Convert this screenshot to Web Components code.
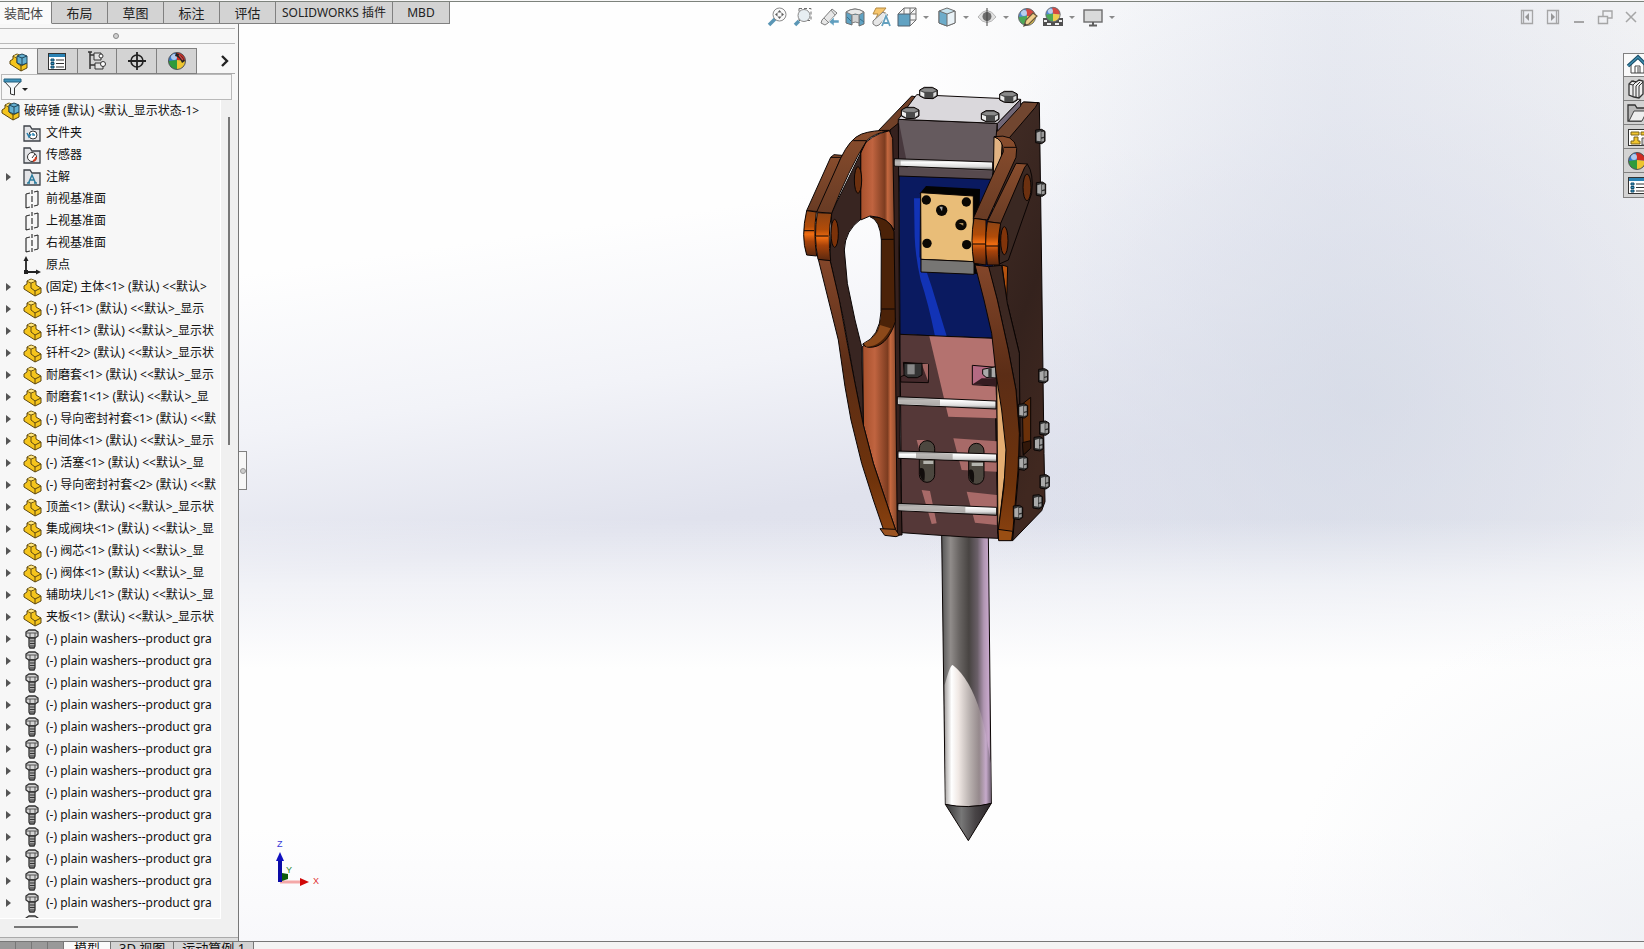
<!DOCTYPE html>
<html lang="zh-CN">
<head>
<meta charset="utf-8">
<title>SOLIDWORKS</title>
<style>
  html, body { height: 100%; }
  body {
    margin: 0;
    overflow: hidden;
    font-family: "Noto Sans", "Noto Sans CJK SC", sans-serif;
    font-size: 12px;
    color: #111;
    background: #f7f7f7;
  }
</style>
</head>
<body>
<cad-app></cad-app>

<script>
const BALL = `
  <circle cx="10" cy="10" r="8.5" fill="#3578d0"/>
  <path d="M9 1.5A8.5 8.5 0 0 1 18.500 10L10 9z" fill="#cf2b22"/>
  <path d="M18.500 10A8.500 8.500 0 0 1 10 18.500L10 9z" fill="#edc52f"/>
  <path d="M1.500 10A8.500 8.500 0 0 0 10 18.500L10 9z" fill="#2f9b3b"/>
  <circle cx="7" cy="6" r="3" fill="#fff" opacity=".6"/>
  <circle cx="10" cy="10" r="8.500" fill="none" stroke="#555"/>`;

const BRICK = `
  <path d="M2 9 5 7V4l4-2 5 2v4l5 3v5l-6 3L2 12z" fill="#f5c51d" stroke="#5c4710" stroke-linejoin="round"/>
  <path d="M5 4l4 2 5-2M9 6v5l4 3 6-3M13 14v5" fill="none" stroke="#5c4710"/>
  <path d="M9.500 2.500 13 4 9 5.500 5.500 4z" fill="#ffe680"/>`;

const FOLDER = `<path d="M2 3h6l2 3h8v12H2z" fill="#e3e4e7" stroke="#3e4248" stroke-width="1.300"/>`;

const LIST = `
  <rect x="1.500" y="2.500" width="17" height="16" fill="#fff" stroke="#333"/>
  <path d="M2 4.500h16" stroke="#2a83b5" stroke-width="3"/>
  <path d="M4 8h3v2H4zM4 11.500h3v2H4zM4 15h3v2H4z" fill="#3b9bc9" stroke="#124a68"/>
  <path d="M9 9h8M9 12.500h8M9 16h8" stroke="#333"/>`;

const SCOPE = `<path d="M3 13 13 2l5 4-9 10-3 2-4-2z" fill="#e4e4e4" stroke="#666"/><path d="M5 11l4 4M12 3l4 5" stroke="#777"/>`;

const ICONS = {
  assembly: `${BRICK}<path d="M9 4l5-2 5 2v7l-5 2-5-2z" fill="#64afd0" stroke="#20475c"/><path d="M9 4l5 2 5-2M14 6v7" fill="none" stroke="#20475c"/>`,
  part: BRICK,
  list: LIST,
  config: `<path d="M3 1v17M3 4h5M3 14h5M1 1h4" fill="none" stroke="#333" stroke-width="1.500"/><path d="M7 2h7v7H7zM8 12h8v6H8z" fill="#e2e2e2" stroke="#333"/><circle cx="14" cy="5" r="2" fill="#fff" stroke="#333"/><circle cx="16" cy="13" r="2.500" fill="#fff" stroke="#333"/>`,
  target: `<circle cx="10" cy="10" r="6" fill="none" stroke="#222" stroke-width="1.600"/><path d="M10 1v18M1 10h18" stroke="#222" stroke-width="1.800"/>`,
  ball: BALL,
  display: `${BALL}<path d="M9 2q5 1 9 8l-3 2Q13 6 8 5z" fill="#222"/><path d="M12 4l4 5" stroke="#c44" stroke-width="1.500"/>`,
  funnel: `<path d="M2 4h17l-6.500 7v7l-4-1v-6z" fill="#f5f8fa" stroke="#333"/><path d="M2 2h17v3H2z" fill="#3e94bd" stroke="#24607e"/>`,
  history: `${FOLDER}<circle cx="11" cy="12" r="4" fill="#fff" stroke="#333"/><path d="M11 10v2h2M5 10l2 4 2-3" stroke="#2980ad" stroke-width="1.500" fill="none"/>`,
  sensor: `${FOLDER}<circle cx="10" cy="12" r="4.500" fill="#fff" stroke="#333"/><path d="M10 13l3-4" stroke="#333"/><path d="M11 16a4 4 0 0 0 3-4" stroke="#d03a1c" stroke-width="2" fill="none"/>`,
  note: `${FOLDER}<path d="M6.500 16 10 8l3.500 8M8 13h4M5 16h3M12 16h3" fill="none" stroke="#2b7c9e" stroke-width="1.500"/>`,
  plane: `<path d="M4 5v14M16 2v14M4 5l4-1M12 3l4-1M4 19l4-1M12 17l4-1M10 1v4M10 7v6M10 15v4" fill="none" stroke="#333" stroke-width="1.200"/>`,
  origin: `<path d="M4 4v13h12" fill="none" stroke="#222" stroke-width="1.800"/><path d="M4 1 1.500 6h5zM19 17l-5-2.500v5z" fill="#222"/><rect x="2" y="15" width="4" height="4" fill="#222"/>`,
  bolt: `<path d="M4 3l3-2h6l3 2v4l-3 2H7L4 7z" fill="#d4d4d4" stroke="#333" stroke-width="1.300"/><path d="M4 4h12M8 4v4M13 4v4" stroke="#555"/><path d="M7 9h6v8l-1 2H8l-1-2z" fill="#aaa" stroke="#333" stroke-width="1.300"/><path d="M8 12h5M8 14.500h5M8 17h5" stroke="#333"/>`,
  zoomfit: `<path d="M8 12 2 18" stroke="#3e85a9" stroke-width="3.500"/><circle cx="12.500" cy="7.500" r="6.500" fill="#fafafa" stroke="#777"/><path d="M12.500 3l2 2.500h-4zM12.500 12l2-2.500h-4zM8 7.500l2.500-2v4zM17 7.500l-2.500-2v4z" fill="#444"/>`,
  zoomarea: `<rect x="6" y="1.500" width="12" height="12" fill="none" stroke="#555" stroke-dasharray="3 2"/><path d="M6 14l-4 4" stroke="#3e85a9" stroke-width="3.500"/><circle cx="11" cy="8.500" r="6" fill="#e4ecf1" stroke="#777"/>`,
  previous: `${SCOPE}<path d="M20 13h-5v-3l-5 5 5 4v-3h5z" fill="#458fb5" stroke="#fff" stroke-width=".5"/>`,
  section: `<path d="M1 5q9-6 18 0v12l-5 2V9H7v9l-6-2z" fill="#4492b9" stroke="#555"/><path d="M1 5q9-6 18 0l-5 3q-4-2-7 0z" fill="#e5e5e5" stroke="#666"/><path d="M7 8v8q3-2 7 0V8" fill="#ccc" stroke="#666"/><path d="M2 10l4 4M15 12l4 3" stroke="#185878"/>`,
  annotation: `<path d="M5 1h10l-4 5h4L4 13l3-6H2z" fill="#f6bd53" stroke="#a67520"/><path d="M2 14 12 5l5 3-9 10-3 1-3-2z" fill="#e4e4e4" stroke="#666"/><path d="M11 19l4-10 4 10M12.500 16h5" fill="none" stroke="#fff" stroke-width="3"/><path d="M11 19l4-10 4 10M12.500 16h5" fill="none" stroke="#4a91b5" stroke-width="1.800"/>`,
  view: `<path d="M7 1h12v12l-6 6V7H1z" fill="#f5f5f5"/><path d="M1 7h12v12H1z" fill="#4693b8" stroke="#345"/><path d="M1 7l6-6h12v12l-6 6M7 1v6M13 7l6-6M13 1v6h6M13 13h6" fill="none" stroke="#555"/>`,
  cube: `<path d="M2 4l8-3 8 3v12l-8 3-8-3z" fill="#bfe0ed" stroke="#555"/><path d="M2 4l8 3v12l-8-3z" fill="#549fc2"/><path d="M10 7l8-3v12l-8 3z" fill="#e6f1f6"/><path d="M2 4l8 3 8-3v12l-8 3-8-3zM10 7v12" fill="none" stroke="#555"/>`,
  eye: `<path d="M1 10q9-13 18 0-9 11-18 0z" fill="#ddd" stroke="#aaa"/><circle cx="10" cy="9.500" r="4.500" fill="#555"/><path d="M10 1v18" stroke="#222"/>`,
  appearance: `${BALL}<path d="M7 19l2-6 7-7 4 3-8 8z" fill="#efc878" stroke="#4f3d1c" stroke-width="1.200"/><path d="M7 19l1-3 2 2z" fill="#222"/>`,
  scene: `<path d="M0 11h20v8H0z" fill="#333"/><path d="M1 13h3v2H1zM16 13h3v2h-3zM4 16h4v2H4zM12 16h4v2h-4z" fill="#eee"/><g transform="translate(1.500 -1) scale(.85)">${BALL}</g>`,
  monitor: `<rect x="1" y="3" width="18" height="12" fill="#d5d5d5" stroke="#555" stroke-width="1.400"/><path d="M10 15v3M6 18.500h8" stroke="#444" stroke-width="2"/>`,
  paneleft: `<path d="M4.500 3.500h11v13h-11zM6.500 4v12" fill="none" stroke="#999" stroke-width="1.300"/><path d="M12 6v8l-4-4z" fill="#888"/>`,
  paneright: `<path d="M4.500 3.500h11v13h-11zM13.500 4v12" fill="none" stroke="#999" stroke-width="1.300"/><path d="M8 6v8l4-4z" fill="#888"/>`,
  minimize: `<path d="M5 15h10" stroke="#999" stroke-width="2"/>`,
  restore: `<path d="M3.500 9.500h9v7h-9zM8 9V4h9v7h-4" fill="none" stroke="#999" stroke-width="1.400"/>`,
  close: `<path d="M5 5l10 10M15 5 5 15" stroke="#999" stroke-width="1.500"/>`,
  home: `<path d="M4 9v9h13V9l-6-6z" fill="#fff" stroke="#444"/><path d="M8 18v-7h5v7M11 12v6" fill="none" stroke="#444"/><path d="M1 11 11 2l9 9" fill="none" stroke="#184b66" stroke-width="3.500"/><path d="M1 11 11 2l9 9" fill="none" stroke="#3e8dae" stroke-width="1.500"/>`,
  library: `<path d="M2 5l3-3 4 1 3-2 4 1v13l-4 4-5-1-5-2z" fill="#eee" stroke="#333" stroke-width="1.300"/><path d="M2 5l4 1v12M6 6l3-3M9 7v12M6 2l3 1M9 7l4-4M12 7v12M12 7l4-4" fill="none" stroke="#333"/>`,
  folder: `<path d="M1 2h7l2 3h8v5l-4 8H1z" fill="#b8b8b8" stroke="#333" stroke-width="1.300"/><path d="M7 8h13l-5 10H2z" fill="#eee" stroke="#444"/>`,
  palette: `<rect x="1.500" y="2.500" width="20" height="16" fill="#fff" stroke="#333"/><path d="M4 5h8v3H4zM14 5h4v3h-4zM7 10h4v4h2v3H4v-3h3z" fill="#f1c52f" stroke="#7b6218"/><path d="M15 11h6v7h-6z" fill="#ccc" stroke="#555"/>`,
  chevron: `<path d="M7 5l5 5-5 5" fill="none" stroke="#222" stroke-width="2.400"/>`
};

class CadIcon extends HTMLElement {
  constructor() {
    super();
    this.attachShadow({ mode: 'open' });
  }

  connectedCallback() {
    this.shadowRoot.innerHTML = `
      <style>
        :host { display: block; flex: none; width: 20px; height: 20px; }
        svg { display: block; width: 100%; height: 100%; overflow: visible; }
      </style>
      <svg viewBox="0 0 20 20" aria-hidden="true">${ICONS[this.getAttribute('name')]}</svg>`;
  }
}

class CommandTabs extends HTMLElement {
  constructor() {
    super();
    this.attachShadow({ mode: 'open' });
    const tabs = ['装配体', '布局', '草图', '标注', '评估', 'SOLIDWORKS 插件', 'MBD'];
    this.shadowRoot.innerHTML = `
      <style>
        :host { display: flex; border-top: 1px solid #7d827c; margin-top: 1px; height: 22px; }
        button {
          box-sizing: border-box; flex: none; width: 56px; height: 22px; padding: 0; margin: 0;
          border: solid #808080; border-width: 0 1px 1px 0;
          background: #d3d3d3; color: #222;
          font: 13px/20px "Noto Sans", "Noto Sans CJK SC", sans-serif;
          white-space: nowrap;
        }
        .active { width: 52px; padding-right: 4px; background: #fafafa; color: #444; border-bottom-color: #fafafa; }
        .latin { width: auto; min-width: 57px; padding: 0 6px; font-size: 12px; }
      </style>
      ${tabs.map((t, i) => `<button class="${i === 0 ? 'active' : /[A-Z]/.test(t) ? 'latin' : ''}">${t}</button>`).join('')}`;
  }
}

class TreeRow extends HTMLElement {
  constructor() {
    super();
    this.attachShadow({ mode: 'open' });
  }

  connectedCallback() {
    this.shadowRoot.innerHTML = `
      <style>
        :host { display: flex; align-items: center; height: 22px; white-space: nowrap; }
        button { flex: none; width: 22px; height: 22px; padding: 0 0 0 6px; border: 0; background: none; }
        i { display: block; width: 0; border: solid transparent; border-width: 4px 0 4px 5px; border-left-color: #555; }
        :host([leaf]) button { visibility: hidden; }
        :host([root]) button { display: none; }
        span { margin-left: 4px; line-height: 22px; }
      </style>
      <button aria-label="展开"><i></i></button>
      <cad-icon name="${this.getAttribute('icon')}"></cad-icon>
      <span><slot></slot></span>`;
  }
}

class FeatureManager extends HTMLElement {
  constructor() {
    super();
    this.attachShadow({ mode: 'open' });
    const fixed = [['history', '文件夹', 1], ['sensor', '传感器', 1], ['note', '注解', 0],
      ['plane', '前视基准面', 1], ['plane', '上视基准面', 1], ['plane', '右视基准面', 1], ['origin', '原点', 1]];
    // component name, then the part of its display state that the column has room for
    const parts = [['(固定) 主体<1>', '默认>'], ['(-) 钎<1>', '默认>_显示'], ['钎杆<1>', '默认>_显示状'],
      ['钎杆<2>', '默认>_显示状'], ['耐磨套<1>', '默认>_显示'], ['耐磨套1<1>', '默认>_显'],
      ['(-) 导向密封衬套<1>', '默'], ['中间体<1>', '默认>_显示'], ['(-) 活塞<1>', '默认>_显'],
      ['(-) 导向密封衬套<2>', '默'], ['顶盖<1>', '默认>_显示状'], ['集成阀块<1>', '默认>_显'],
      ['(-) 阀芯<1>', '默认>_显'], ['(-) 阀体<1>', '默认>_显'], ['辅助块儿<1>', '默认>_显'],
      ['夹板<1>', '默认>_显示状']];
    const esc = s => s.replace(/</g, '&lt;').replace(/>/g, '&gt;');
    const rows = [
      ...fixed.map(([icon, text, leaf]) => `<tree-row icon="${icon}" ${leaf ? 'leaf' : ''}>${text}</tree-row>`),
      ...parts.map(([name, state]) => `<tree-row icon="part">${esc(`${name} (默认) <<${state}`)}</tree-row>`),
      ...Array(13).fill('<tree-row icon="bolt">(-) plain washers--product gra</tree-row>'),
      '<tree-row icon="bolt" leaf></tree-row>'
    ];
    this.shadowRoot.innerHTML = `
      <style>
        :host { display: flex; flex-direction: column; min-height: 0; background: #f7f7f7; border-right: 1px solid #777; }
        .grip { flex: none; height: 14px; margin: 4px 3px 0 0; border: solid #b9b9b9; border-width: 1px 0; padding-right: 4px; display: grid; place-items: center; }
        .dot { width: 4px; height: 4px; border: 1px solid #888; border-radius: 50%; background: #d0d0d0; }
        .tabs { flex: none; display: flex; height: 25px; margin: 4px 3px 0 0; border-bottom: 1px solid #aaa; }
        .tabs button {
          box-sizing: border-box; width: 40px; height: 26px; padding: 0; display: grid; place-items: center;
          border: 1px solid #808080; border-left-width: 0; background: #d3d3d3;
        }
        .tabs button:first-child { width: 38px; background: #f7f7f7; border-bottom: 0; border-top-color: #aaa; }
        .tabs .more { width: auto; flex: 1; border: 0; padding-left: 18px; background: none; }
        .filter { flex: none; display: flex; align-items: center; height: 24px; margin: 0 6px 0 1px; border: 1px solid #b9b9b9; }
        .filter i { border: solid transparent; border-width: 3px 3px 0; border-top-color: #222; margin-top: 5px; }
        input { flex: 1; min-width: 0; border: 0; background: none; outline: 0; font: inherit; }
        .body { flex: 1; min-height: 0; display: grid; grid-template-columns: 1fr 17px; background: #f0f0f0; }
        .tree { overflow: hidden; min-width: 0; background: #f7f7f7; border: solid #fff; border-width: 0 1px 1px 0; }
        .bar { margin: 17px auto 0 7px; width: 2px; height: 328px; background: #777; }
        .hbar { flex: none; height: 18px; background: #f0f0f0; border-bottom: 1px solid #aaa; }
        .hbar i { display: block; width: 64px; height: 2px; margin: 7px 0 0 14px; background: #777; }
        .gap { flex: none; height: 3px; background: #ddd; }
      </style>
      <div class="grip"><span class="dot"></span></div>
      <div class="tabs">
        <button aria-label="特征树"><cad-icon name="assembly"></cad-icon></button>
        <button aria-label="属性"><cad-icon name="list"></cad-icon></button>
        <button aria-label="配置"><cad-icon name="config"></cad-icon></button>
        <button aria-label="尺寸"><cad-icon name="target"></cad-icon></button>
        <button aria-label="外观"><cad-icon name="display"></cad-icon></button>
        <button class="more" aria-label="更多"><cad-icon name="chevron"></cad-icon></button>
      </div>
      <div class="filter">
        <cad-icon name="funnel"></cad-icon><i></i><input aria-label="过滤">
      </div>
      <div class="body">
        <div class="tree">
          <tree-row icon="assembly" root>破碎锤 (默认) &lt;默认_显示状态-1&gt;</tree-row>
          ${rows.join('')}
        </div>
        <div class="bar"></div>
      </div>
      <div class="hbar"><i></i></div>
      <div class="gap"></div>`;
  }
}

class HeadsUpBar extends HTMLElement {
  constructor() {
    super();
    this.attachShadow({ mode: 'open' });
    // items marked with + open a drop-down
    const tools = ['zoomfit', 'zoomarea', 'previous', 'section', 'annotation', 'view+', 'cube+', 'eye+', 'appearance', 'scene+', 'monitor+'];
    const win = ['paneleft', 'paneright', 'minimize', 'restore', 'close'];
    const button = n => `<button class="${n.endsWith('+') ? 'drop' : ''}" aria-label="${n.replace('+', '')}"><cad-icon name="${n.replace('+', '')}"></cad-icon></button>`;
    this.shadowRoot.innerHTML = `
      <style>
        :host { display: grid; grid-template-columns: 1fr auto 1fr; height: 26px; }
        div { display: flex; align-items: center; }
        button { display: flex; align-items: center; justify-content: center; width: 26px; height: 24px; padding: 0; border: 0; background: none; opacity: .85; }
        .drop { width: 40px; justify-content: flex-start; gap: 6px; padding-left: 3px; }
        .drop::after { content: ""; border: solid transparent; border-width: 3px 3px 0; border-top-color: #777; }
        .tools { grid-column: 2; }
        .win { justify-content: flex-end; }
      </style>
      <div class="tools">${tools.map(button).join('')}</div>
      <div class="win">${win.map(button).join('')}</div>`;
  }
}

class TaskPane extends HTMLElement {
  constructor() {
    super();
    this.attachShadow({ mode: 'open' });
    const icons = ['home', 'library', 'folder', 'palette', 'ball', 'list'];
    this.shadowRoot.innerHTML = `
      <style>
        :host { display: flex; flex-direction: column; width: 21px; overflow: hidden; border: 1px solid #808080; border-right: 0; box-sizing: border-box; }
        button { box-sizing: border-box; height: 24px; padding: 0 0 0 3px; border: 0; border-bottom: 1px solid #808080; background: #d3d3d3; }
        button:first-of-type { height: 23px; background: #fafafa; }
        button:last-child { border-bottom: 0; }
      </style>
      ${icons.map(n => `<button aria-label="${n}"><cad-icon name="${n}"></cad-icon></button>`).join('')}`;
  }
}

class HammerModel extends HTMLElement {
  constructor() {
    super();
    this.attachShadow({ mode: 'open' });
    const sideBolts = [[750, 200], [752, 358], [759, 918], [698, 1023], [762, 1075], [745, 1122], [698, 1180], [763, 1236], [742, 1296], [683, 1328]];
    const topBolts = [[415, 70], [655, 82], [360, 130], [600, 140]];
    const holes = [[409, 390], [529, 396], [411, 520], [530, 524]];
    this.shadowRoot.innerHTML = `
      <style>
        :host { display: block; }
        svg { display: block; width: 100%; }
        .o { stroke: #0b0504; stroke-width: 3; stroke-linejoin: round; }
        .l { fill: none; stroke: #0b0504; stroke-width: 3; }
      </style>
      <svg viewBox="0 0 810 2340" role="img" aria-label="破碎锤">
        <defs>
          <linearGradient id="steel"><stop offset="0" stop-color="#555"/><stop offset=".18" stop-color="#908c8a"/><stop offset=".35" stop-color="#6a6664"/><stop offset=".55" stop-color="#484442"/><stop offset=".72" stop-color="#6a5f68"/><stop offset=".85" stop-color="#b096b2"/><stop offset=".95" stop-color="#c8a8cc"/><stop offset="1" stop-color="#6e6070"/></linearGradient>
          <linearGradient id="lit"><stop offset="0" stop-color="#a8a4a2"/><stop offset=".15" stop-color="#fff"/><stop offset=".3" stop-color="#f0e8e4"/><stop offset=".55" stop-color="#b8b0ae"/><stop offset=".75" stop-color="#95898c"/><stop offset=".9" stop-color="#c6aacb"/><stop offset="1" stop-color="#77687a"/></linearGradient>
          <linearGradient id="cone"><stop offset="0" stop-color="#333"/><stop offset=".35" stop-color="#777"/><stop offset=".65" stop-color="#484446"/><stop offset="1" stop-color="#2a2428"/></linearGradient>
          <linearGradient id="bore"><stop offset="0" stop-color="#a6502c"/><stop offset=".35" stop-color="#c06440"/><stop offset=".72" stop-color="#7c3c20"/><stop offset=".8" stop-color="#c4683f"/><stop offset="1" stop-color="#84462a"/></linearGradient>
          <linearGradient id="pin" x2="0" y2="1"><stop offset="0" stop-color="#8c4415"/><stop offset=".35" stop-color="#b24c08"/><stop offset=".52" stop-color="#f06d12"/><stop offset=".68" stop-color="#a8430a"/><stop offset="1" stop-color="#582810"/></linearGradient>
          <linearGradient id="edge" x2="0" y2="1"><stop offset="0" stop-color="#894d2d"/><stop offset="1" stop-color="#683b24"/></linearGradient>
          <linearGradient id="arm" x2="0" y2="1"><stop offset="0" stop-color="#83462a"/><stop offset=".4" stop-color="#5b2d16"/><stop offset=".8" stop-color="#6f330b"/><stop offset="1" stop-color="#8a4210"/></linearGradient>
          <linearGradient id="plate" x2=".3" y2="1"><stop offset="0" stop-color="#432d26"/><stop offset=".6" stop-color="#34221d"/><stop offset="1" stop-color="#402820"/></linearGradient>
          <linearGradient id="rod" x2="0" y2="1"><stop offset="0" stop-color="#777"/><stop offset=".3" stop-color="#fff"/><stop offset=".7" stop-color="#ddd"/><stop offset="1" stop-color="#666"/></linearGradient>
          <g id="sb"><path d="M-13-20 5-22 15-16V14L5 21-13 18z" fill="#303030" class="o"/><path d="M-10-12 2-16V14l-12-2z" fill="#aaa"/><path d="M4-14l8-1V0L4 2zM4 6l8-2v9l-8 2z" fill="#999"/></g>
          <g id="tb"><path d="M-26-10-12-18 12-18 27-10V8L14 16-12 15-26 8z" fill="#4a4a4a" class="o"/><path d="M-24-9-11-15 12-15 24-9 13-4-12-5z" fill="#8a8a8a"/><path d="M-24-6-12-1V12l-12-6z" fill="#eee"/><path d="M15-1 24-5V6l-9 6z" fill="#ddd"/></g>
        </defs>

        <!-- chisel -->
        <path class="o" d="M455 1395H595L604 2200Q535 2218 466 2203z" fill="url(#steel)"/>
        <path d="M464 1845Q480 1785 488 1785Q540 1825 572 1930Q590 1990 602 2080V2200Q535 2216 467 2203z" fill="url(#lit)"/>
        <path class="o" d="M466 2203Q535 2218 604 2200L535 2312z" fill="url(#cone)"/>

        <!-- right side plate -->
        <path class="o" d="M610 192 700 96 748 98 755 600 762 1150 765 1295 755 1322 668 1412 620 1400z" fill="url(#plate)"/>
        <path class="o" d="M610 192 700 96 744 98 736 112 642 222z" fill="#714630"/>
        <path class="l" d="M652 700 688 850 690 1180M690 1160 668 1412"/>
        <path class="o" d="M697 1002 722 982V1135L700 1155z" fill="#6a3009"/>
        <path class="o" d="M697 1118 722 1112V1135L700 1155z" fill="#32180a"/>

        <!-- housing and lid -->
        <path class="o" d="M365 78 384 82 325 155V185L265 182z" fill="#704028"/>
        <path class="o" d="M325 148 622 160 606 330 325 318z" fill="#655a5e"/>
        <path d="M326 152 358 316 326 314z" fill="#47383d"/>
        <path d="M326 292 606 304V330L326 318z" fill="#574a4e"/>
        <path class="o" d="M692 88V108L622 184V160z" fill="#716777"/>
        <path class="o" d="M380 74 692 88 622 160 325 148z" fill="#dad8dc"/>

        <!-- blue cylinder block -->
        <path class="o" d="M327 318 606 328 612 805 330 793z" fill="#0a1a60"/>
        <path d="M372 385H390L388 560 410 606 425 650 470 798H435Q415 700 392 630 376 560 374 500z" fill="#1233b6"/>
        <path d="M390 370 408 348 570 357 566 612 393 606z" fill="#030303"/>
        <path class="o" d="M392 368 550 378V575L393 568z" fill="#e9bd78"/>
        <path class="o" d="M393 568 552 575V613L393 606z" fill="#777674"/>
        ${holes.map(([x, y]) => `<circle cx="${x}" cy="${y}" r="14" fill="#0b0804"/>`).join('')}
        <circle cx="455" cy="421" r="17" fill="#0b0804"/><path d="M448 410l8 14 2-14z" fill="#aaa"/>
        <circle cx="513" cy="464" r="17" fill="#0b0804"/><path d="M506 459h14v8z" fill="#a98b59"/>

        <!-- lower block -->
        <path class="o" d="M330 793 612 805 624 1405Q530 1402 450 1396L335 1388z" fill="#553838"/>
        <path d="M418 799 612 807 620 1045 475 1040z" fill="#b4726f"/>
        <path d="M490 1105 620 1114V1205L515 1200zM530 1265 620 1275V1365L555 1358zM395 1260 420 1263 440 1360 425 1362zM380 1110 410 1110V1140H388z" fill="#a86a68"/>
        <path class="o" d="M340 877 415 883V938L332 936V920L345 915z" fill="#44292b"/>
        <path d="M395 882h19v50z" fill="#a36663"/>
        <path class="o" d="M342 880h54v35l-14 8h-28l-12-8z" fill="#333"/><path d="M352 883h22v30h-22z" fill="#888"/>
        <path class="o" d="M547 886 618 892V948L547 944z" fill="#b46a83"/><path d="M548 943 575 925H618V948z" fill="#351c20"/>
        <path class="o" d="M578 898l40-8v34l-30-2-10-9z" fill="#aaa"/><path d="M595 895h10v28h-10z" fill="#333"/>
        <rect class="o" x="388" y="1112" width="46" height="125" rx="23" fill="#4c473f"/>
        <rect class="o" x="536" y="1120" width="46" height="123" rx="23" fill="#4c473f"/>
        <path d="M400 1172h30v10h-30zM545 1178h34v10h-34z" fill="#b4b4ae"/>
        <path d="M389 1195q20-8 14 38-14-5-14-30zM537 1200q20-8 14 38-14-5-14-30z" fill="#120d0c"/>

        <path class="o" d="M300 180 325 160 330 1100 336 1395 318 1395z" fill="#35211e"/>

        <!-- tie rods -->
        <path class="o" d="M313 266 608 276V300L313 288z" fill="url(#rod)"/>
        <path class="o" d="M322 980 618 993V1017L322 1004z" fill="url(#rod)"/>
        <path class="o" d="M324 1143 620 1152V1176L324 1165z" fill="url(#rod)"/>
        <path class="o" d="M324 1300 620 1312V1336L324 1322z" fill="url(#rod)"/>
        <path d="M314 270 332 271V287L314 286zM325 984 450 989V1007L325 1001zM378 1147 488 1151V1170L378 1165zM326 1304 526 1311V1328L326 1320z" fill="#8d8986" opacity=".6"/>

        <!-- left bracket -->
        <path class="o" d="M212 235Q240 195 298 182L308 205 313 480Q290 440 240 438L212 450z" fill="url(#bore)"/>
        <path class="o" d="M218 828Q295 815 315 745L322 1395 290 1300 250 1180 220 1065z" fill="url(#bore)"/>
        <path class="o" d="M240 440Q300 440 312 485L316 755Q290 835 235 832 222 830 218 822 270 800 273 725L274 510Q270 450 240 440z" fill="#4b2208"/>
        <path d="M222 820Q264 800 270 765L302 775Q272 832 228 830z" fill="#a85a22" opacity=".7"/>
        <path class="l" d="M274 508H311M275 717H314"/>
        <path class="o" d="M230 212 212 235V448Q165 482 163 540L172 640 195 750 215 830 220 1065 195 940 160 745 120 570 125 428z" fill="#382521"/>
        <path class="o" d="M85 568 120 570 148 690 170 810 195 940 220 1065 250 1180 290 1300 322 1395 285 1392 250 1290 215 1180 183 1050 165 950 145 810z" fill="url(#arm)"/>
        <path class="o" d="M270 1376 316 1378 328 1396 318 1400 284 1396z" fill="#9b5422"/>
        <path class="o" d="M122 262 132 254 156 256 152 264 88 425 50 422z" fill="url(#edge)"/>
        <path class="o" d="M152 265Q180 205 215 192 250 180 298 181 248 192 230 212 175 300 125 430L80 426z" fill="url(#edge)"/>
        <path class="l" d="M122 262H152M190 212H230"/>
        <path class="o" d="M50 422 79 426Q70 490 80 558L50 555Q32 500 50 422z" fill="url(#pin)"/>
        <path class="o" d="M82 428 125 430Q112 500 122 572L84 568Q70 500 82 428z" fill="url(#pin)"/>
        <path class="l" d="M42 482H72M78 498H115"/>
        <ellipse class="o" cx="134" cy="490" rx="11" ry="42" fill="#7c3209"/>
        <ellipse class="o" cx="204" cy="330" rx="11" ry="40" fill="#6c300f"/>

        <!-- right bracket -->
        <path class="o" d="M612 200 637 212 634 260 610 325z" fill="#e2b382"/>
        <path class="o" d="M620 900 642 1010 651 1110 645 1210 624 1390z" fill="#e4ad72"/>
        <path class="o" d="M636 585 653 590 650 690z" fill="#b5520f"/>
        <path class="o" d="M595 590 635 586 652 700 688 850 690 1100 678 960 655 840 622 690z" fill="#3b2721"/>
        <path class="o" d="M555 585 596 590 622 690 655 840 678 960 688 1090 685 1190 668 1390 665 1410 626 1410 625 1380 642 1250 648 1140 635 1020 618 910 605 790 582 690z" fill="url(#arm)"/>
        <path class="o" d="M624 1378 668 1384 665 1412H626z" fill="#994e13"/>
        <path class="o" d="M612 200Q672 190 680 235L678 262 592 450 550 445 640 245Q640 210 612 200z" fill="url(#edge)"/>
        <path class="l" d="M642 232H678"/>
        <path class="o" d="M712 282Q732 310 725 370L655 570 628 582 630 460 704 290z" fill="#3a2822"/>
        <path class="o" d="M678 280 712 282 704 292 632 460 592 455z" fill="url(#edge)"/>
        <path class="o" d="M552 445 588 450V585L552 580Q540 510 552 445z" fill="url(#pin)"/>
        <path class="o" d="M592 455 632 460Q620 520 628 585H592Q582 520 592 455z" fill="url(#pin)"/>
        <path class="l" d="M548 522H586M588 528H624"/>
        <ellipse class="o" cx="643" cy="512" rx="11" ry="42" fill="#81340a"/>
        <ellipse class="o" cx="711" cy="352" rx="12" ry="40" fill="#6c300f"/>

        ${sideBolts.map(([x, y]) => `<use href="#sb" x="${x}" y="${y}"/>`).join('')}
        ${topBolts.map(([x, y]) => `<use href="#tb" x="${x}" y="${y}"/>`).join('')}
      </svg>`;
  }
}

class AxisTriad extends HTMLElement {
  constructor() {
    super();
    this.attachShadow({ mode: 'open' });
    this.shadowRoot.innerHTML = `
      <style>
        :host { display: block; width: 52px; height: 52px; }
        text { font: 9px "Liberation Sans", sans-serif; }
      </style>
      <svg viewBox="0 0 52 52" width="52" height="52">
        <text x="7" y="8" fill="#3838d8">Z</text>
        <text x="16" y="34" fill="#2b8a2b">Y</text>
        <text x="43" y="45" fill="#e03030">X</text>
        <path d="M10 43h20" stroke="#f4a8a8" stroke-width="3"/>
        <path d="M30 39v8l9-4z" fill="#d00808"/>
        <path d="M12 34l6 1v5l-6 2z" fill="#0c5a0c"/>
        <path d="M10 43V20" stroke="#0b0ba6" stroke-width="4"/>
        <path d="M10 13 6 22h8z" fill="#1010c0"/>
      </svg>`;
  }
}

class CadViewport extends HTMLElement {
  constructor() {
    super();
    this.attachShadow({ mode: 'open' });
    this.shadowRoot.innerHTML = `
      <style>
        :host {
          position: relative; display: block; overflow: hidden; box-sizing: border-box;
          border-top: 1px solid #7d827c; margin-top: 1px;
          background:
            radial-gradient(26% 36% at 100% 100%, rgba(238,240,244,.8), transparent),
            linear-gradient(to bottom, transparent 55%, rgba(255,255,255,.55) 62%, #fefefe 71%, #fefefe 88%, #f8f8fb),
            radial-gradient(34% 48% at 80% 42%, rgba(206,212,226,.55), rgba(214,218,232,.4) 50%, transparent),
            linear-gradient(to right, transparent 48%, rgba(228,231,239,.75) 78%, rgba(238,239,242,.85)),
            linear-gradient(172deg, #fefefe 24%, #f2f3f8 38%, #e0e2ed 51%, #dfe1ec 60%);
        }
        heads-up-bar { padding-top: 2px; }
        task-pane { position: absolute; top: 51px; right: 0; }
        /* model and triad sit on the free canvas */
        hammer-model { position: absolute; top: 68px; left: 551px; width: 270px; }
        axis-triad { position: absolute; left: 31px; bottom: 50px; }
        .handle {
          position: absolute; top: 449px; left: 0; width: 8px; height: 39px; padding: 0;
          display: grid; place-items: center;
          border: 1px solid #808080; border-left: 0; background: #f7f7f7;
        }
        .handle i { width: 4px; height: 4px; border: 1px solid #999; border-radius: 50%; background: #ccc; }
      </style>
      <hammer-model></hammer-model>
      <heads-up-bar></heads-up-bar>
      <task-pane></task-pane>
      <axis-triad></axis-triad>
      <button class="handle" aria-label="折叠面板"><i></i></button>`;
  }
}

class SheetTabs extends HTMLElement {
  constructor() {
    super();
    this.attachShadow({ mode: 'open' });
    this.shadowRoot.innerHTML = `
      <style>
        :host { display: flex; align-items: flex-start; overflow: hidden; border-top: 1px solid #777; background: #f4f4f4; }
        button { box-sizing: border-box; flex: none; height: 12px; margin: 0; padding: 0; border: 0; border-right: 1px solid #777; }
        .nav { width: 16px; background: #999; }
        .tab { padding: 0 8px; background: #d3d3d3; color: #111; font: 13px/12px "Noto Sans", "Noto Sans CJK SC", sans-serif; }
        .on { padding: 0 10px; background: #fafafa; }
      </style>
      <button class="nav" aria-label="第一个"></button><button class="nav" aria-label="上一个"></button><button class="nav" aria-label="下一个"></button><button class="nav" aria-label="最后"></button>
      <button class="tab on">模型</button><button class="tab">3D 视图</button><button class="tab">运动算例 1</button>`;
  }
}

class CadApp extends HTMLElement {
  constructor() {
    super();
    this.attachShadow({ mode: 'open' });
    this.shadowRoot.innerHTML = `
      <style>
        :host { display: grid; grid-template: 24px minmax(0, 1fr) 8px / 239px minmax(0, 1fr); height: 100vh; }
        command-tabs { grid-area: 1 / 1 / 2 / 3; justify-self: start; z-index: 1; }
        feature-manager { grid-area: 2 / 1; }
        cad-viewport { grid-area: 1 / 2 / 3 / 3; }
        sheet-tabs { grid-area: 3 / 1 / 4 / 3; }
      </style>
      <command-tabs></command-tabs>
      <feature-manager></feature-manager>
      <cad-viewport></cad-viewport>
      <sheet-tabs></sheet-tabs>`;
  }
}

customElements.define('cad-icon', CadIcon);
customElements.define('command-tabs', CommandTabs);
customElements.define('tree-row', TreeRow);
customElements.define('feature-manager', FeatureManager);
customElements.define('heads-up-bar', HeadsUpBar);
customElements.define('task-pane', TaskPane);
customElements.define('hammer-model', HammerModel);
customElements.define('axis-triad', AxisTriad);
customElements.define('cad-viewport', CadViewport);
customElements.define('sheet-tabs', SheetTabs);
customElements.define('cad-app', CadApp);
</script>
</body>
</html>
